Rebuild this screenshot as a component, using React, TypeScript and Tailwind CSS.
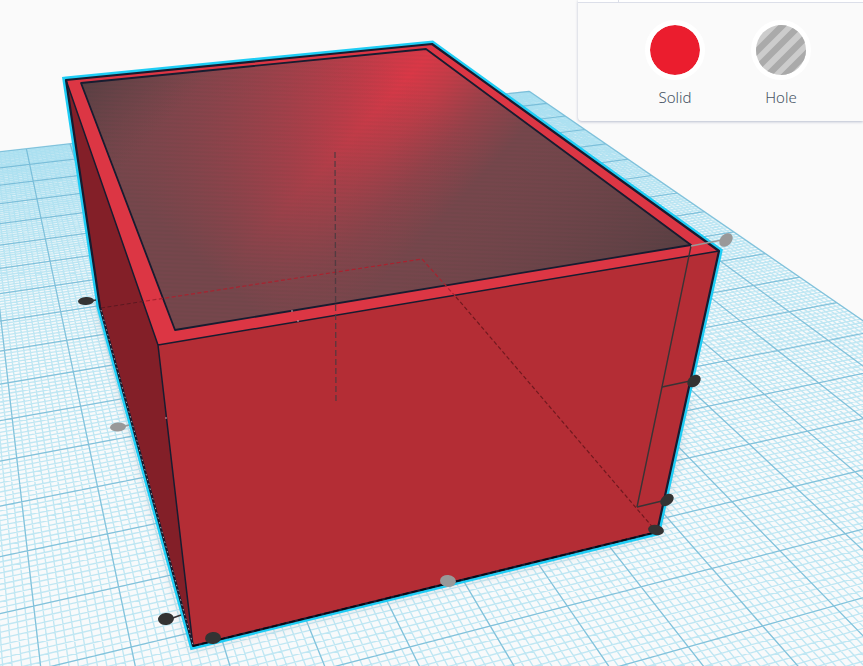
type Point = [number, number];

// perspective projection of the workplane, one unit is a major grid square
function project(i: number, j: number): Point {
  const d = 1 + 0.02117 * i - 0.0633 * j;
  return [
    (567.3 + 87.4 * i + 4.6 * j) / d,
    (606 - 6.775 * i + 20.4 * j) / d,
  ];
}

const LEFT = -9;
const RIGHT = 8;
const FAR = -17;
const NEAR = 3;

function segment(a: Point, b: Point) {
  return `M${a[0].toFixed(1)} ${a[1].toFixed(1)}L${b[0].toFixed(1)} ${b[1].toFixed(1)}`;
}

function gridPath(step: number) {
  const parts: string[] = [];
  const columns = Math.round((RIGHT - LEFT) / step);
  const rows = Math.round((NEAR - FAR) / step);
  for (let n = 0; n <= columns; n++) {
    const i = LEFT + n * step;
    parts.push(segment(project(i, FAR), project(i, NEAR)));
  }
  for (let n = 0; n <= rows; n++) {
    const j = FAR + n * step;
    parts.push(segment(project(LEFT, j), project(RIGHT, j)));
  }
  return parts.join("");
}

const minorGrid = gridPath(0.1);
const majorGrid = gridPath(1);

const plane = [
  project(LEFT, FAR),
  project(RIGHT, FAR),
  project(RIGHT, NEAR),
  project(LEFT, NEAR),
]
  .map((p) => p.join(","))
  .join(" ");

const outline = "66,80 432,44 719,251 657,532 193,646 100,307";
const inner = "81,83 426,49 691,245 175,330";

const handles = [
  { x: 86, y: 301, rx: 8, ry: 4, angle: -4, color: "#333333" },
  { x: 118, y: 427, rx: 8, ry: 4.5, angle: -4, color: "#999999" },
  { x: 166, y: 619, rx: 8, ry: 6, angle: -8, color: "#333333" },
  { x: 213, y: 638, rx: 8, ry: 6, angle: -6, color: "#333333" },
  { x: 448, y: 581, rx: 8, ry: 6, angle: 4, color: "#999999" },
  { x: 656, y: 530, rx: 8, ry: 5, angle: 10, color: "#333333" },
  { x: 667, y: 500, rx: 7.5, ry: 5.2, angle: -38, color: "#333333" },
  { x: 694, y: 381, rx: 7.5, ry: 5.4, angle: -40, color: "#333333" },
  { x: 726, y: 240, rx: 7.8, ry: 5.6, angle: -46, color: "#999999" },
];

function Workplane() {
  return (
    <g>
      <polygon points={plane} fill="#f8fafb" />
      <polygon points={plane} fill="url(#haze)" />
      <path
        d={minorGrid}
        stroke="#86d3ec"
        strokeOpacity="0.5"
        strokeWidth="1.3"
        fill="none"
      />
      <path
        d={majorGrid}
        stroke="#4fa3c7"
        strokeOpacity="0.55"
        strokeWidth="1.2"
        fill="none"
      />
    </g>
  );
}

function Box() {
  return (
    <g strokeLinejoin="round">
      <polygon
        points={outline}
        fill="#8a9aa5"
        stroke="#8a9aa5"
        strokeWidth="10"
        opacity="0.22"
        filter="url(#soft)"
        clipPath="url(#ground)"
      />
      <polygon
        points={outline}
        fill="none"
        stroke="#1fcdf5"
        strokeWidth="7"
        strokeLinejoin="miter"
      />
      <polygon points={outline} fill="#dc3644" />
      <polygon points="66,80 158,345 193,646 100,307" fill="#831f28" />
      <polygon points="158,345 719,251 657,532 193,646" fill="#b42d35" />

      <polygon points={inner} fill="url(#ridge)" />
      <polygon points={inner} fill="url(#ridgeFade)" />
      <polygon points={inner} fill="url(#corners)" />
      <polygon points={inner} fill="url(#streaks)" />

      <g fill="none" stroke="#171c30">
        <polygon points={inner} strokeWidth="1.8" />
        <path d="M66 80L158 345L719 251M158 345L193 646" strokeWidth="1.5" />
        <polygon points={outline} strokeWidth="2.2" />
      </g>
      <path
        d="M101 310L193 645"
        stroke="#d9e0e6"
        strokeOpacity="0.75"
        strokeDasharray="1.5 3.5"
      />
      <path
        d="M193 646L657 532"
        stroke="#050a14"
        strokeWidth="1.5"
        strokeDasharray="6 3"
      />

      {/* hidden base edges */}
      <g fill="none" strokeDasharray="4 2.5">
        <path d="M101 308L146 301" stroke="#5c1820" />
        <path
          d="M146 301L422 259L456 297"
          stroke="#a8222f"
          strokeWidth="1.2"
        />
        <path d="M456 297L655 530" stroke="#71191f" strokeWidth="1.2" />
      </g>
      <path
        d="M335 152L336 404"
        stroke="#4a3a40"
        strokeOpacity="0.85"
        strokeWidth="1.3"
        strokeDasharray="6 3"
      />
      <path d="M291 311h2M297 321h2M165 418h2" stroke="#d3a5ad" />
    </g>
  );
}

function Handles() {
  return (
    <g>
      <g fill="none" stroke="#3a3335" strokeWidth="1.4">
        <path d="M691 246L662 387L637 507" />
        <path d="M662 387L690 381M637 507L662 501" />
        <path d="M90 301L96 300M170 619L181 615" />
      </g>
      <path
        d="M691 246L722 240M122 427L129 425"
        stroke="#999999"
        strokeWidth="1.4"
      />
      {handles.map((h) => (
        <ellipse
          key={`${h.x}-${h.y}`}
          cx={h.x}
          cy={h.y}
          rx={h.rx}
          ry={h.ry}
          fill={h.color}
          transform={`rotate(${h.angle} ${h.x} ${h.y})`}
        />
      ))}
    </g>
  );
}

function Scene() {
  return (
    <svg
      className="block h-full w-full"
      viewBox="0 0 863 666"
      preserveAspectRatio="xMinYMin slice"
      role="img"
      aria-label="Open box on the workplane"
    >
      <defs>
        <filter id="soft" x="-10%" y="-10%" width="120%" height="120%">
          <feGaussianBlur stdDeviation="5" />
        </filter>
        <clipPath id="ground">
          <path d="M60 300H100L200 500L657 500L690 400H760V666H60Z" />
        </clipPath>
        <linearGradient
          id="haze"
          gradientUnits="userSpaceOnUse"
          x1="500"
          y1="80"
          x2="520"
          y2="310"
        >
          <stop offset="0" stopColor="#7fd0ea" stopOpacity="0.4" />
          <stop offset="0.6" stopColor="#7fd0ea" stopOpacity="0.08" />
          <stop offset="1" stopColor="#7fd0ea" stopOpacity="0" />
        </linearGradient>
        <linearGradient
          id="ridge"
          gradientUnits="userSpaceOnUse"
          x1="159"
          y1="0"
          x2="455"
          y2="276"
        >
          <stop offset="0" stopColor="#74464b" />
          <stop offset="0.12" stopColor="#7f444b" />
          <stop offset="0.33" stopColor="#a83f49" />
          <stop offset="0.5" stopColor="#c83a47" />
          <stop offset="0.58" stopColor="#d93846" />
          <stop offset="0.66" stopColor="#c03c47" />
          <stop offset="0.76" stopColor="#964149" />
          <stop offset="0.88" stopColor="#74464b" />
        </linearGradient>
        <linearGradient
          id="ridgeFade"
          gradientUnits="userSpaceOnUse"
          x1="425"
          y1="48"
          x2="215"
          y2="275"
        >
          <stop offset="0.1" stopColor="#74464b" stopOpacity="0" />
          <stop offset="0.38" stopColor="#74464b" stopOpacity="0.26" />
          <stop offset="0.65" stopColor="#74464b" stopOpacity="0.56" />
          <stop offset="1" stopColor="#74464b" stopOpacity="1" />
        </linearGradient>
        <linearGradient
          id="corners"
          gradientUnits="userSpaceOnUse"
          x1="82"
          y1="83"
          x2="486"
          y2="460"
        >
          <stop offset="0" stopColor="#573f42" stopOpacity="1" />
          <stop offset="0.16" stopColor="#6a4347" stopOpacity="0" />
          <stop offset="0.66" stopColor="#6a4347" stopOpacity="0" />
          <stop offset="1" stopColor="#573f42" stopOpacity="1" />
        </linearGradient>
        <pattern
          id="streaks"
          width="120"
          height="4"
          patternUnits="userSpaceOnUse"
          patternTransform="rotate(2)"
        >
          <path d="M0 1H120" stroke="#3a3036" strokeOpacity="0.07" />
          <path d="M0 3H120" stroke="#ff5060" strokeOpacity="0.03" />
        </pattern>
      </defs>
      <Workplane />
      <Box />
      <Handles />
    </svg>
  );
}

function ShapePanel() {
  return (
    <div className="absolute right-0 top-0 w-[285px] rounded-bl bg-[#fafafa] shadow-[0_1px_3px_#b9bfd0]">
      <div className="flex h-[3px] border-b border-[#dcdfe9] bg-white">
        <div className="w-[41px] border-r border-[#dcdfe9]" />
      </div>
      <div className="flex pb-3.5 pl-11 pt-[17px] text-[15px] font-light leading-5 text-[#465364]">
        <button type="button" className="flex w-[106px] flex-col items-center gap-[7px]">
          <span className="size-[60px] rounded-full border-[5px] border-white bg-[#eb1d2e] bg-clip-padding" />
          Solid
        </button>
        <button type="button" className="flex w-[106px] flex-col items-center gap-[7px]">
          <svg className="size-[60px]" viewBox="0 0 60 60" aria-hidden="true">
            <defs>
              <clipPath id="disc">
                <circle cx="30" cy="30" r="25" />
              </clipPath>
            </defs>
            <circle cx="30" cy="30" r="30" fill="#ffffff" />
            <g clipPath="url(#disc)">
              <rect width="60" height="60" fill="#cccccc" />
              <path
                d="M-10 47L47 -10M-10 64L64 -10M-10 82L82 -10M-10 99L99 -10"
                stroke="#aaaaaa"
                strokeWidth="6.5"
              />
            </g>
          </svg>
          Hole
        </button>
      </div>
    </div>
  );
}

export default function App() {
  return (
    <main className="relative h-screen w-full overflow-hidden bg-[#fafafa] font-['Noto_Sans',sans-serif]">
      <Scene />
      <ShapePanel />
    </main>
  );
}
